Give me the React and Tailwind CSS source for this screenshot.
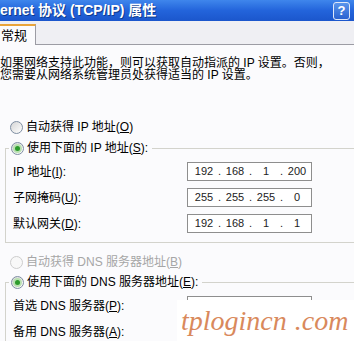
import { Fragment } from "react";

const cjk = "font-['Liberation_Sans','Noto_Sans_CJK_SC',sans-serif]";

function Radio({ checked, disabled }) {
  return (
    <span
      className={
        disabled
          ? "flex h-[13px] w-[13px] shrink-0 items-center justify-center rounded-full border border-[#cdcdcd] bg-[#f8f8f8]"
          : "flex h-[13px] w-[13px] shrink-0 items-center justify-center rounded-full border border-[#7e8ea2] bg-gradient-to-br from-[#d6d6d6] to-white"
      }
    >
      {checked && <span className="h-[5px] w-[5px] rounded-full bg-[#2c9b2c] ring-2 ring-[#b8e0b0]" />}
    </span>
  );
}

function Option({ checked, disabled, children }) {
  return (
    <div className={`flex h-[16px] items-center gap-[3px] whitespace-nowrap ${disabled ? "text-[#a6a6a6]" : "text-black"}`}>
      <Radio checked={checked} disabled={disabled} />
      <span className="leading-[16px]">{children}</span>
    </div>
  );
}

function IpBox({ parts }) {
  return (
    <div className="flex h-[19px] w-[125px] items-center border border-[#8e8e8e] bg-white pl-[2px] font-['Liberation_Sans',sans-serif] text-[11px] text-[#222]">
      {parts.map((p, i) => (
        <Fragment key={i}>
          <span className="w-[28px] text-center">{p}</span>
          {i < 3 && <span className="w-[3px] text-center">.</span>}
        </Fragment>
      ))}
    </div>
  );
}

function Row({ label, parts }) {
  return (
    <div className="flex h-[19px] items-center whitespace-nowrap">
      <span className="w-[181px] shrink-0 pl-[7px]">{label}</span>
      <IpBox parts={parts} />
    </div>
  );
}

function Group({ caption, children }) {
  return (
    <div className="ml-[5px] w-[360px] border-t border-l border-b border-[#d3d3cc] pb-[9px]">
      <div className="-mt-[9px] ml-[3px] flex w-fit bg-[#fbfbfd] pl-[2px] pr-[4px]">{caption}</div>
      <div className="mt-[6px] flex flex-col gap-[7px]">{children}</div>
    </div>
  );
}

export default function App() {
  return (
    <div className={`relative h-[341px] w-[354px] overflow-hidden bg-[#fbfbfd] text-[12px] ${cjk}`}>
      {/* title bar */}
      <div className="flex h-[21px] items-center justify-between bg-gradient-to-b from-[#3f86ec] via-[#2364db] to-[#1b56cc] pr-[4px]">
        <span className="whitespace-nowrap text-[14px] font-bold text-white [text-shadow:1px_1px_0_#0d3a8c]">ernet 协议 (TCP/IP) 属性</span>
        <span className="flex h-[18px] w-[17px] items-center justify-center rounded-[3px] border border-[#dfe8f8] bg-gradient-to-b from-[#5a95ec] to-[#2b62d0] text-[13px] font-bold leading-none text-white">
          ?
        </span>
      </div>

      {/* tabs */}
      <div className="flex h-[24px] items-end border-b border-[#9c9ca4] bg-[#efeff3]">
        <div className="-mb-px flex h-[21px] w-[36px] items-center border-t-2 border-r border-t-[#e9a43a] border-r-[#9c9ca4] bg-[#fbfbfd] pl-[1px] text-[13px] text-black">
          常规
        </div>
      </div>

      {/* body */}
      <div className="pt-[12px] text-black">
        <p className="whitespace-nowrap leading-[12px]">如果网络支持此功能，则可以获取自动指派的 IP 设置。否则，</p>
        <p className="whitespace-nowrap leading-[12px]">您需要从网络系统管理员处获得适当的 IP 设置。</p>

        <div className="mt-[38px] pl-[10px]">
          <Option>
            自动获得 IP 地址(<u>O</u>)
          </Option>
        </div>

        <div className="mt-[13px]">
          <Group
            caption={
              <Option checked>
                使用下面的 IP 地址(<u>S</u>):
              </Option>
            }
          >
            <Row label={<>IP 地址(<u>I</u>):</>} parts={["192", "168", "1", "200"]} />
            <Row label={<>子网掩码(<u>U</u>):</>} parts={["255", "255", "255", "0"]} />
            <Row label={<>默认网关(<u>D</u>):</>} parts={["192", "168", "1", "1"]} />
          </Group>
        </div>

        <div className="mt-[11px] pl-[10px]">
          <Option disabled>
            自动获得 DNS 服务器地址(<u>B</u>)
          </Option>
        </div>

        <div className="mt-[12px]">
          <Group
            caption={
              <Option checked>
                使用下面的 DNS 服务器地址(<u>E</u>):
              </Option>
            }
          >
            <Row label={<>首选 DNS 服务器(<u>P</u>):</>} parts={["", "", "", ""]} />
            <Row label={<>备用 DNS 服务器(<u>A</u>):</>} parts={["", "", "", ""]} />
          </Group>
        </div>
      </div>

      {/* watermark */}
      <div className="absolute left-[177px] top-[300px] flex h-[41px] w-[177px] items-center bg-white pl-[4px]">
        <span className="whitespace-nowrap font-['Liberation_Serif',serif] text-[28px] italic leading-none text-[#d9895c]">
          tplogincn<span className="ml-[8px]">.com</span>
        </span>
      </div>
    </div>
  );
}
